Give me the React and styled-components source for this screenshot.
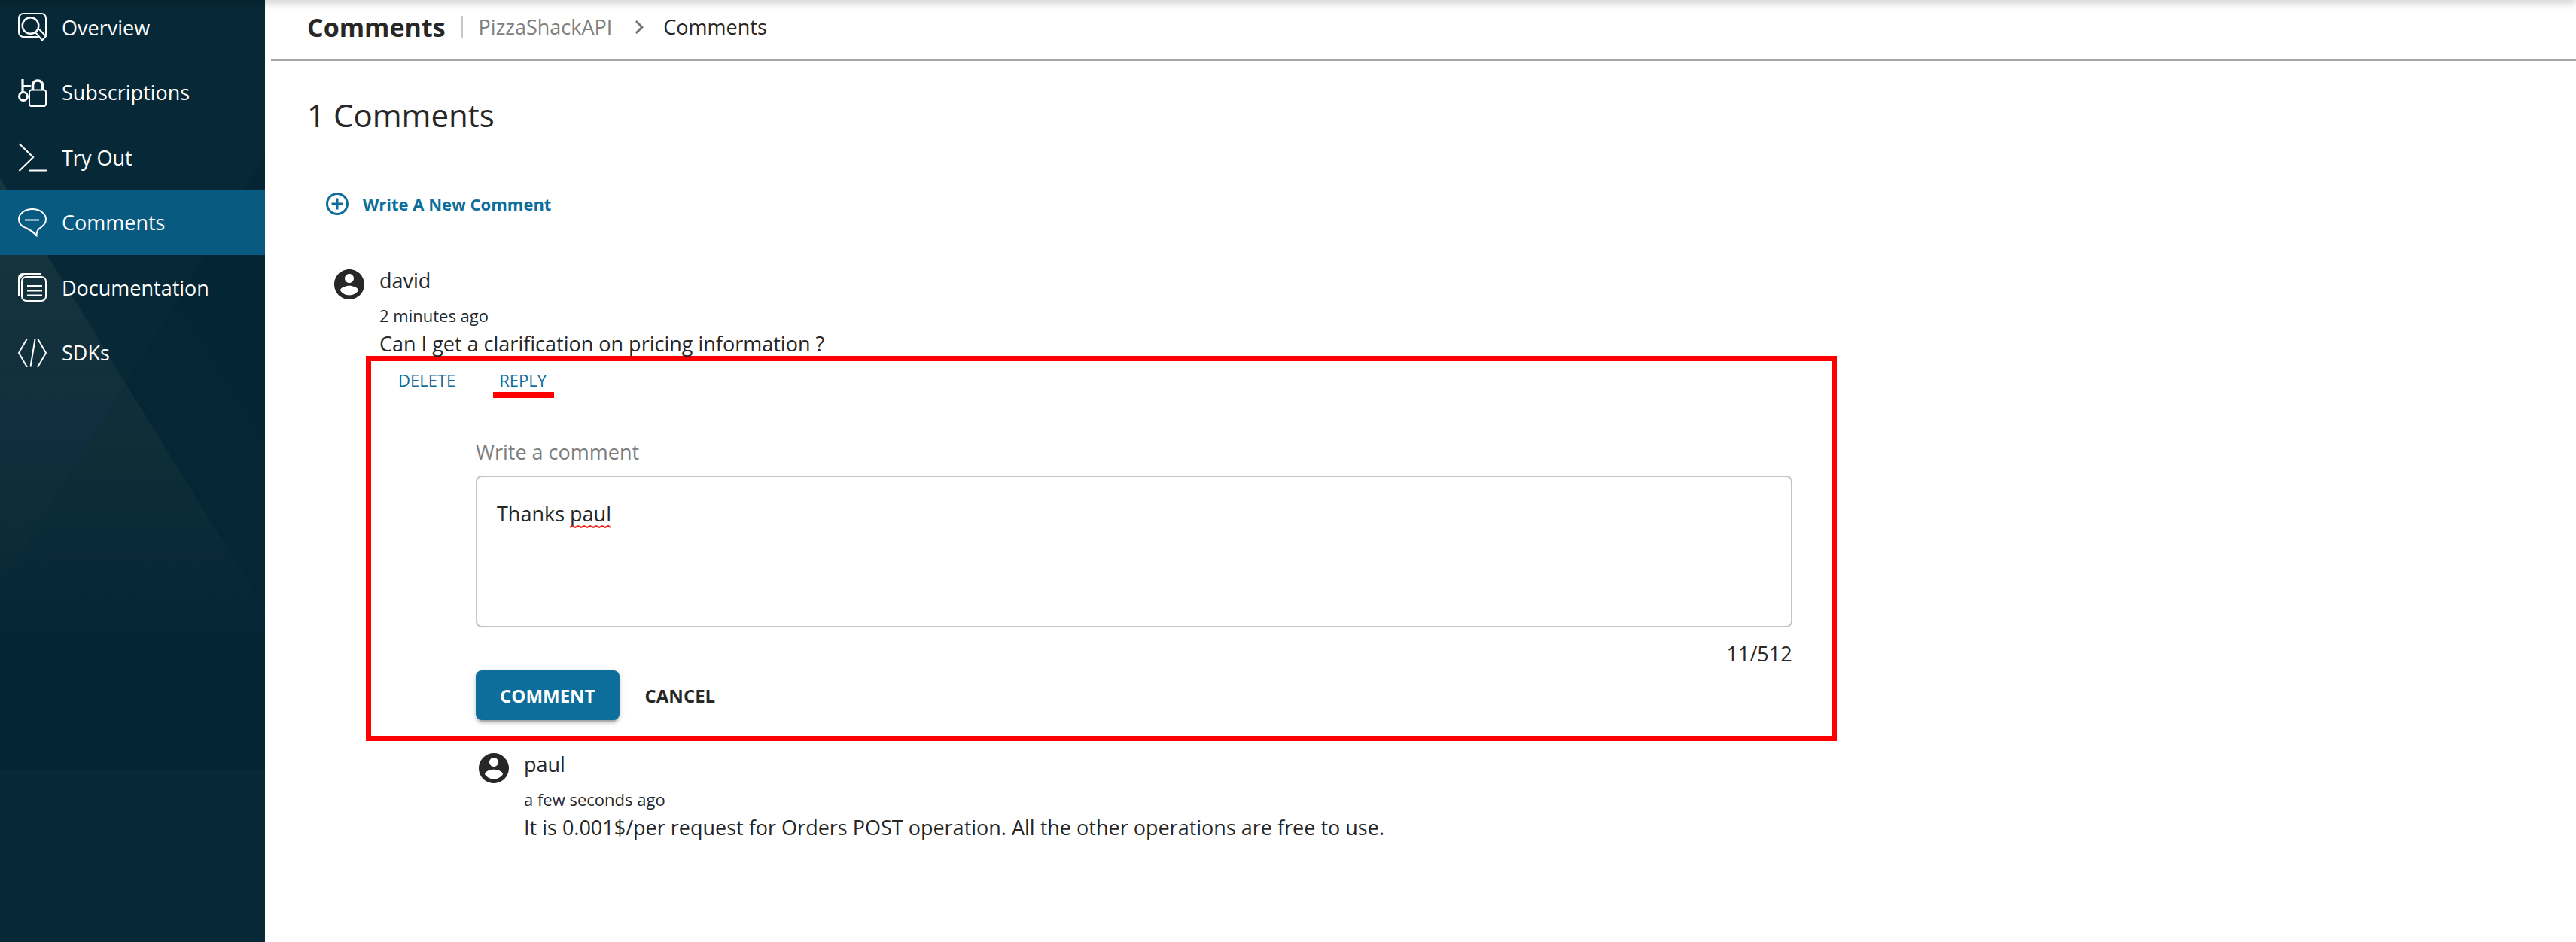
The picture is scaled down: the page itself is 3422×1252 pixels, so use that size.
import React, { useState } from "react";
import styled, { createGlobalStyle, css } from "styled-components";

const GlobalStyle = createGlobalStyle`
  * { box-sizing: border-box; }
  body {
    margin: 0;
    background: #fff;
    color: #272727;
    font-family: "Open Sans", "Noto Sans", sans-serif;
    font-size: 27px;
  }
  h1, h2, p, ul, ol { margin: 0; padding: 0; }
  button, textarea { font: inherit; color: inherit; }
`;

const Page = styled.div`
  display: flex;
  min-height: 100vh;
  overflow: hidden;
`;

const AppBarEdge = styled.div`
  position: fixed;
  z-index: 2;
  top: -8px;
  left: 0;
  right: 0;
  height: 8px;
  box-shadow: 0 4px 8px rgba(0, 0, 0, 0.16), 0 2px 20px rgba(0, 0, 0, 0.1);
`;

const Sidebar = styled.nav`
  position: relative;
  flex: none;
  width: 352px;
  background: #072836;
`;

const Backdrop = styled.svg`
  position: absolute;
  top: 0;
  left: 0;
  width: 352px;
  height: 1252px;
`;

const MenuList = styled.ul`
  position: relative;
  display: grid;
  grid-auto-rows: 1fr;
  height: 519px;
  margin-top: -7px;
  list-style: none;
`;

const MenuLink = styled.a`
  display: flex;
  align-items: center;
  gap: 20px;
  height: 100%;
  padding-left: 24px;
  color: #fff;
  text-decoration: none;
  background: ${(p) => (p.$active ? "#085a80" : "transparent")};
`;

const MenuIcon = styled.svg`
  width: 38px;
  height: 38px;
  fill: none;
  stroke: #fff;
  stroke-width: 2;
`;

const Main = styled.main`
  flex: 1;
  min-width: 0;
`;

const TitleBar = styled.header`
  display: flex;
  align-items: center;
  margin-left: 8px;
  padding: 8px 48px 15px;
  border-bottom: 2px solid #a7a7a7;
  line-height: 56px;
`;

const Title = styled.h1`
  padding-right: 21px;
  font-size: 34px;
  line-height: 56px;
  font-weight: 700;
`;

const Breadcrumb = styled.ol`
  display: flex;
  align-items: center;
  list-style: none;
`;

const Divider = styled.span`
  width: 2px;
  height: 30px;
  margin-right: 21px;
  background: #c8c8c8;
`;

const Crumb = styled.a`
  color: ${(p) => (p.$current ? "#272727" : "#808080")};
  text-decoration: none;
`;

const CrumbArrow = styled.svg`
  width: 36px;
  height: 36px;
  margin: 0 14px 0 18px;
  display: block;
  fill: #757575;
`;

const Heading = styled.h2`
  margin: 44px 0 70px 56px;
  font-size: 42px;
  line-height: 56px;
  font-weight: 400;
`;

const NewComment = styled.button`
  display: flex;
  align-items: center;
  gap: 16px;
  height: 40px;
  margin-left: 78px;
  padding: 0;
  border: 0;
  background: none;
  color: #0b6e9b;
  font-size: 22px;
  font-weight: 700;
`;

const Glyph = styled.svg`
  flex: none;
  width: ${(p) => p.$size}px;
  height: ${(p) => p.$size}px;
  fill: currentColor;
`;

const Thread = styled.section`
  width: 68%;
  padding-top: 62px;
`;

const CommentRow = styled.article`
  display: flex;
  align-items: flex-start;
  gap: 16px;
  padding-left: ${(p) => (p.$reply ? 280 : 88)}px;
  padding-top: ${(p) => (p.$reply ? 11 : 0)}px;

  svg { margin-top: 1px; }
`;

const Author = styled.p`
  line-height: 40px;
`;

const Time = styled.p`
  margin: 8px 0 4px;
  font-size: 22px;
  line-height: 36px;
`;

const Body = styled.p`
  line-height: 32px;
`;

const ReplyArea = styled.div`
  margin-left: 134px;
  padding: 7px 52px 21px 139px;
  border: 7px solid #fe0000;
`;

const Actions = styled.div`
  display: flex;
  gap: 58px;
  margin-left: -103px;
`;

const TextAction = styled.button`
  position: relative;
  padding: 0;
  border: 0;
  background: none;
  color: #0b6e9b;
  font-size: 22px;
  line-height: 36px;
  text-transform: uppercase;

  ${(p) =>
    p.$marked &&
    css`
      &::after {
        content: "";
        position: absolute;
        top: 34px;
        left: -8px;
        right: -10px;
        height: 8px;
        background: #fe0000;
      }
    `}
`;

const Form = styled.form`
  padding-top: 58px;
`;

const Label = styled.label`
  display: block;
  margin-bottom: 11px;
  color: #7d7d7d;
  line-height: 40px;
`;

const Field = styled.div`
  position: relative;
`;

const TextBox = styled.textarea`
  display: block;
  width: 100%;
  padding: 30px 26px 16px;
  border: 2px solid #c4c4c4;
  border-radius: 8px;
  background: #fff;
  line-height: 38px;
  resize: none;
  outline: none;
`;

const SpellMark = styled.svg`
  position: absolute;
  top: 65px;
  left: 125px;
  width: 54px;
  height: 6px;
  fill: none;
  stroke: #f01810;
  stroke-width: 2;
`;

const Counter = styled.p`
  margin: 15px 0 2px;
  line-height: 40px;
  text-align: right;
`;

const Buttons = styled.div`
  display: flex;
  gap: 16px;
`;

const Button = styled.button`
  height: 66px;
  padding: 0 ${(p) => (p.$primary ? 32 : 18)}px;
  border: 0;
  border-radius: 8px;
  background: ${(p) => (p.$primary ? "#0d6e9b" : "transparent")};
  box-shadow: ${(p) =>
    p.$primary ? "0 6px 2px -4px rgba(0,0,0,.2), 0 4px 4px rgba(0,0,0,.14), 0 2px 10px rgba(0,0,0,.12)" : "none"};
  color: ${(p) => (p.$primary ? "#fff" : "#272727")};
  font-size: 24px;
  font-weight: 700;
  text-transform: uppercase;
`;

const MENU = [
  {
    label: "Overview",
    icon: (
      <>
        <path d="M27 32H7a6 6 0 0 1-6-6V7a6 6 0 0 1 6-6h24a6 6 0 0 1 6 6v23" />
        <circle cx="16.5" cy="17" r="10.8" strokeWidth="2.4" />
        <path d="M23 26l4.5-4.5L37 31l-5 5.500z" />
      </>
    ),
  },
  {
    label: "Subscriptions",
    icon: (
      <>
        <circle cx="7" cy="24" r="5.500" strokeWidth="3" />
        <path d="M6 1v18M6 10.500h11" strokeWidth="3.2" />
        <path d="M19.500 15V9a6 6 0 0 1 6-6h1a6 6 0 0 1 6 6v6" strokeWidth="3.600" />
        <rect x="15" y="15.500" width="22" height="21.500" rx="3" />
      </>
    ),
  },
  { label: "Try Out", icon: <path d="M1.500 1L20 19 1.500 37M15 36.500h23" strokeWidth="2.200" /> },
  {
    label: "Comments",
    icon: (
      <>
        <path d="M19 1c10 0 18 6 18 13.500 0 6-4 9-9 12.500-3 2.500-3.500 5-3.500 9-4-4.500-8.500-7.500-13-9.500C5 24.500 1 21 1 14.500 1 7 9 1 19 1z" />
        <path d="M9 15.500h19" />
      </>
    ),
  },
  {
    label: "Documentation",
    icon: (
      <>
        <path d="M0 31V6a6 6 0 0 1 6-6h25v2H12q-8 1-10 9v20z" fill="#fff" stroke="none" />
        <rect x="5" y="5" width="32" height="32" rx="6" />
        <path d="M12 17h20M12 23.500h20M12 29.500h20" />
      </>
    ),
  },
  { label: "SDKs", icon: <path d="M12 0L1 19l11 19M26 0l11 19-11 19M22.500 1L16.500 37.500" /> },
];

const ACTIVE = "Comments";
const LIMIT = 512;

function SidebarBackdrop() {
  return (
    <Backdrop viewBox="0 0 352 1252" preserveAspectRatio="none" aria-hidden="true">
      <defs>
        <linearGradient id="facet" x1="0" y1="237" x2="0" y2="860" gradientUnits="userSpaceOnUse">
          <stop offset="0" stopColor="#17363f" />
          <stop offset="0.42" stopColor="#12303c" />
          <stop offset="0.52" stopColor="#102f3f" />
          <stop offset="0.78" stopColor="#0b2b36" />
          <stop offset="1" stopColor="#032534" />
        </linearGradient>
        <linearGradient id="lower" x1="0" y1="510" x2="0" y2="860" gradientUnits="userSpaceOnUse">
          <stop offset="0" stopColor="#112f3a" />
          <stop offset="0.4" stopColor="#0b2c36" />
          <stop offset="0.65" stopColor="#092939" />
          <stop offset="1" stopColor="#032534" />
        </linearGradient>
      </defs>
      <path d="M352 205L235 400l117 185z" fill="#032534" />
      <path d="M235 400L167 510 352 810V585z" fill="#052635" />
      <path d="M0 778L167 510 352 810v214H0z" fill="url(#lower)" />
      <path d="M0 237L167 510 0 778z" fill="url(#facet)" />
      <path d="M0 860h352v164H0z" fill="#032534" />
    </Backdrop>
  );
}

function Avatar() {
  return (
    <Glyph $size={48} viewBox="0 0 24 24" aria-hidden="true">
      <path d="M12 2C6.480 2 2 6.480 2 12s4.480 10 10 10 10-4.480 10-10S17.520 2 12 2zm0 3c1.660 0 3 1.340 3 3s-1.340 3-3 3-3-1.340-3-3 1.340-3 3-3zm0 14.200c-2.500 0-4.710-1.280-6-3.220.03-1.990 4-3.080 6-3.080 1.990 0 5.970 1.090 6 3.080-1.290 1.940-3.500 3.220-6 3.220z" />
    </Glyph>
  );
}

function Comment({ author, time, text, reply }) {
  return (
    <CommentRow $reply={reply}>
      <Avatar />
      <div>
        <Author>{author}</Author>
        <Time>{time}</Time>
        <Body>{text}</Body>
      </div>
    </CommentRow>
  );
}

function ReplyForm() {
  const [draft, setDraft] = useState("Thanks paul");
  return (
    <Form onSubmit={(e) => e.preventDefault()}>
      <Label htmlFor="reply">Write a comment</Label>
      <Field>
        <TextBox
          id="reply"
          rows={4}
          maxLength={LIMIT}
          spellCheck={false}
          value={draft}
          onChange={(e) => setDraft(e.target.value)}
        />
        {draft === "Thanks paul" && (
          <SpellMark viewBox="0 0 54 6" aria-hidden="true">
            <path d="M0 4l3-2 4 2 4-2 4 2 4-2 4 2 4-2 4 2 4-2 4 2 4-2 4 2 4-2 3 2" />
          </SpellMark>
        )}
      </Field>
      <Counter>{`${draft.length}/${LIMIT}`}</Counter>
      <Buttons>
        <Button type="submit" $primary>Comment</Button>
        <Button type="button">Cancel</Button>
      </Buttons>
    </Form>
  );
}

export default function App() {
  return (
    <>
      <GlobalStyle />
      <AppBarEdge />
      <Page>
        <Sidebar aria-label="API">
          <SidebarBackdrop />
          <MenuList>
            {MENU.map(({ label, icon }) => (
              <li key={label}>
                <MenuLink href="#" $active={label === ACTIVE}>
                  <MenuIcon viewBox="0 0 38 38" aria-hidden="true">{icon}</MenuIcon>
                  {label}
                </MenuLink>
              </li>
            ))}
          </MenuList>
        </Sidebar>
        <Main>
          <TitleBar>
            <Title>Comments</Title>
            <Divider />
            <Breadcrumb>
              <li><Crumb href="#">PizzaShackAPI</Crumb></li>
              <li aria-hidden="true">
                <CrumbArrow viewBox="0 0 24 24">
                  <path d="M10 6L8.590 7.410 13.170 12l-4.580 4.590L10 18l6-6z" />
                </CrumbArrow>
              </li>
              <li><Crumb href="#" $current>Comments</Crumb></li>
            </Breadcrumb>
          </TitleBar>
          <Heading>1 Comments</Heading>
          <NewComment type="button">
            <Glyph $size={36} viewBox="0 0 24 24" aria-hidden="true">
              <path d="M13 7h-2v4H7v2h4v4h2v-4h4v-2h-4V7zm-1-5C6.480 2 2 6.480 2 12s4.480 10 10 10 10-4.480 10-10S17.520 2 12 2zm0 18c-4.410 0-8-3.590-8-8s3.590-8 8-8 8 3.590 8 8-3.590 8-8 8z" />
            </Glyph>
            Write A New Comment
          </NewComment>
          <Thread>
            <Comment
              author="david"
              time="2 minutes ago"
              text="Can I get a clarification on pricing information ?"
            />
            <ReplyArea>
              <Actions>
                <TextAction type="button">Delete</TextAction>
                <TextAction type="button" $marked>Reply</TextAction>
              </Actions>
              <ReplyForm />
            </ReplyArea>
            <Comment
              reply
              author="paul"
              time="a few seconds ago"
              text="It is 0.001$/per request for Orders POST operation. All the other operations are free to use."
            />
          </Thread>
        </Main>
      </Page>
    </>
  );
}
